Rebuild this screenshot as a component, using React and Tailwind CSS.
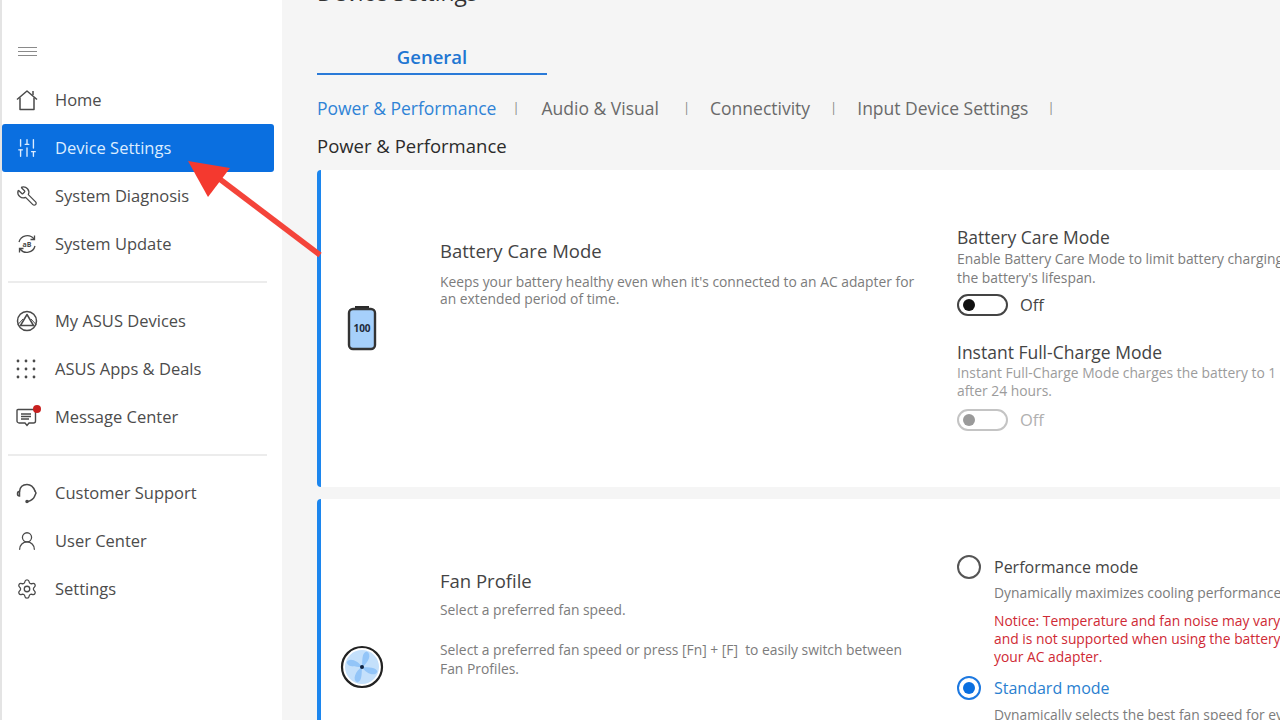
import React from "react";
import { Wrench, UserRound, Settings, SlidersVertical } from "lucide-react";

const font = { fontFamily: '"Open Sans", "Noto Sans", sans-serif' };

// small custom icons, the ASUS ones aren't in lucide
const MenuIcon = () => (
  <svg width="20" height="12" viewBox="0 0 20 12" fill="none" stroke="#8a8a8a" strokeWidth="1.2">
    <path d="M0 1.5H19M0 5.5H19M0 9.5H19" />
  </svg>
);

const HomeIcon = () => (
  <svg width="22" height="22" viewBox="0 0 22 22" fill="none" stroke="#4a4a4a" strokeWidth="1.5" strokeLinejoin="round">
    <path d="M1 10.5L11 2L21 10.5" />
    <path d="M4 8.5V20.5H18V8.5" />
    <path d="M17 2V6" />
  </svg>
);

const UpdateIcon = () => (
  <svg width="22" height="22" viewBox="0 0 22 22" fill="none" stroke="#4a4a4a" strokeWidth="1.3">
    <path d="M3 9a8.5 8.5 0 0 1 15-3" />
    <path d="M19 13a8.5 8.5 0 0 1-15 3" />
    <path d="M18.5 2.5V6.5H14.5" />
    <path d="M3.5 19.5V15.5H7.5" />
    <text x="11" y="13.5" textAnchor="middle" fontSize="7" fontWeight="700" fill="#4a4a4a" stroke="none">aB</text>
  </svg>
);

const DevicesIcon = () => (
  <svg width="22" height="22" viewBox="0 0 22 22" fill="none" stroke="#4a4a4a" strokeWidth="1.5">
    <circle cx="11" cy="11" r="9.5" />
    <path d="M11 4.5L17.5 15.5H4.5Z" strokeLinejoin="round" />
    <path d="M2 14.5L7 9M20 14.5L15 9" strokeWidth="1" />
  </svg>
);

const AppsIcon = () => (
  <svg width="20" height="20" viewBox="0 0 20 20" fill="#4a4a4a">
    {[2, 10, 18].map((y) =>
      [2, 10, 18].map((x) => <circle key={`${x}-${y}`} cx={x} cy={y} r="1.4" />)
    )}
  </svg>
);

const MessageIcon = () => (
  <div className="relative w-[22px] h-[22px]">
    <svg width="22" height="22" viewBox="0 0 22 22" fill="none" stroke="#4a4a4a" strokeWidth="1.4">
      <path d="M2 3.5H17.5C18.5 3.5 19.5 4.5 19.5 5.5V15C19.5 16 18.5 17 17.5 17H13L11 19.5L9 17H3C2 17 1 16 1 15V4.5C1 4 1.5 3.5 2 3.5Z" />
      <path d="M5 8H15M5 10.5H15M5 13H13" />
    </svg>
    <span className="absolute -top-[1px] right-[-3px] w-2 h-2 rounded-full bg-[#c8201f]" />
  </div>
);

const SupportIcon = () => (
  <svg width="22" height="22" viewBox="0 0 22 22" fill="none" stroke="#4a4a4a" strokeWidth="1.5" strokeLinecap="round">
    <path d="M3.5 9.5C4 5 7 2.5 11 2.5C14.5 2.5 17.5 5 19 9" />
    <path d="M19 9L20 11L18.5 14.5C17.5 17 15 18.5 12 19.5" />
    <path d="M3 9.5C2 9.5 1.5 10.5 1.5 12C1.5 13.5 2 14 3.5 14V9.5Z" />
    <circle cx="11" cy="19.5" r="1" fill="#4a4a4a" />
  </svg>
);

const BatteryIcon = () => (
  <svg width="30" height="46" viewBox="0 0 30 46">
    <path d="M8 2.5H22" stroke="#2b2b2b" strokeWidth="3" />
    <rect x="2" y="4" width="26" height="40" rx="4" fill="#a6d0fb" stroke="#333" strokeWidth="2.4" />
    <text x="15" y="27" textAnchor="middle" fontSize="10" fontWeight="700" fill="#1d2a3a" style={font}>100</text>
  </svg>
);

const FanIcon = () => (
  <svg width="44" height="44" viewBox="0 0 44 44">
    <circle cx="22" cy="22" r="20" fill="#fff" stroke="#222" strokeWidth="2.2" />
    <circle cx="22" cy="22" r="17" fill="#c4e0fb" />
    <g transform="rotate(20 22 22)">
      <path d="M22 22C20 15 17 9 21 6C27 6 27 16 22 22Z" fill="#93c5f8" />
      <path d="M22 22C29 20 35 17 38 21C38 27 28 27 22 22Z" fill="#93c5f8" />
      <path d="M22 22C24 29 27 35 23 38C17 38 17 28 22 22Z" fill="#93c5f8" />
      <path d="M22 22C15 24 9 27 6 23C6 17 16 17 22 22Z" fill="#93c5f8" />
    </g>
    <circle cx="22" cy="22" r="2" fill="#10233f" />
  </svg>
);

const NavItem = ({ icon, label, active }) => (
  <div
    className={`flex items-center h-12 w-[272px] rounded-[3px] text-[16.5px] ${
      active ? "bg-[#0a6fe0] text-[#dcecff]" : "text-[#4c4c4c]"
    }`}
  >
    <div className="w-[53px] pl-[14px] flex items-center">{icon}</div>
    <span>{label}</span>
  </div>
);

const Toggle = ({ disabled }) => (
  <div className="flex items-center gap-3">
    <div
      className={`w-[51px] h-[22px] rounded-full border-2 flex items-center pl-1 ${
        disabled ? "border-[#c4c4c4]" : "border-[#444]"
      }`}
    >
      <span className={`w-3 h-3 rounded-full ${disabled ? "bg-[#9a9a9a]" : "bg-[#111]"}`} />
    </div>
    <span className={`text-[16.5px] ${disabled ? "text-[#b0b0b0]" : "text-[#444]"}`}>Off</span>
  </div>
);

export default function App() {
  return (
    <div className="relative w-[1280px] h-[720px] overflow-hidden flex bg-[#f5f5f5]" style={font}>
      <aside className="w-[282px] shrink-0 bg-white border-l-2 border-[#e4e4e4]">
        <div className="pl-[16px] pt-[46px] h-[76px]">
          <MenuIcon />
        </div>
        <NavItem icon={<HomeIcon />} label="Home" />
        <NavItem icon={<SlidersVertical size={22} strokeWidth={1.5} color="#dcecff" />} label="Device Settings" active />
        <NavItem icon={<Wrench size={22} strokeWidth={1.4} color="#4a4a4a" className="-scale-x-100" />} label="System Diagnosis" />
        <NavItem icon={<UpdateIcon />} label="System Update" />
        <div className="h-[2px] bg-[#ececec] ml-[6px] w-[259px] mt-[13px] mb-[14px]" />
        <NavItem icon={<DevicesIcon />} label="My ASUS Devices" />
        <NavItem icon={<AppsIcon />} label="ASUS Apps & Deals" />
        <NavItem icon={<MessageIcon />} label="Message Center" />
        <div className="h-[2px] bg-[#ececec] ml-[6px] w-[259px] mt-[13px] mb-[13px]" />
        <NavItem icon={<SupportIcon />} label="Customer Support" />
        <NavItem icon={<UserRound size={22} strokeWidth={1.4} color="#4a4a4a" />} label="User Center" />
        <NavItem icon={<Settings size={22} strokeWidth={1.4} color="#4a4a4a" />} label="Settings" />
      </aside>

      <main className="flex-1 min-w-0 pl-[35px] -mt-[20px]">
        <div className="text-[22.8px] leading-[26px] text-[#333] whitespace-nowrap">Device Settings</div>

        <div className="w-[230px] mt-[28px] border-b-2 border-[#2a7ad8] text-center text-[18.5px] leading-[34px] h-[41px] pt-[6px] text-[#2176d2] font-semibold">
          General
        </div>

        <div className="flex items-center mt-[20px] h-[26px] text-[17.5px] whitespace-nowrap text-[#6a6a6a]">
          <span className="text-[#2f83d6]">Power &amp; Performance</span>
          <span className="ml-[16px] mr-[22px] text-[13px] text-[#888]">|</span>
          <span>Audio &amp; Visual</span>
          <span className="ml-[24px] mr-[20px] text-[13px] text-[#888]">|</span>
          <span>Connectivity</span>
          <span className="ml-[20px] mr-[20px] text-[13px] text-[#888]">|</span>
          <span>Input Device Settings</span>
          <span className="ml-[19px] text-[13px] text-[#888]">|</span>
        </div>

        <div className="mt-[12px] h-[26px] text-[18.5px] leading-[26px] text-[#2b2b2b]">Power &amp; Performance</div>

        <section className="mt-[11px] h-[317px] bg-white border-l-4 border-[#1c86ee] rounded-l-[4px] flex whitespace-nowrap">
          <div className="w-[119px] shrink-0 pl-[26px] pt-[135px]">
            <BatteryIcon />
          </div>
          <div className="w-[517px] shrink-0 pt-[68px]">
            <div className="text-[18.5px] leading-[26px] text-[#444]">Battery Care Mode</div>
            <div className="mt-[9px] text-[13.85px] leading-[17px] text-[#7c7c7c]">
              Keeps your battery healthy even when it's connected to an AC adapter for
              <br />
              an extended period of time.
            </div>
          </div>
          <div className="pt-[55px]">
            <div className="text-[17.5px] leading-[24px] text-[#444]">Battery Care Mode</div>
            <div className="text-[13.85px] leading-[19px] text-[#7c7c7c]">
              Enable Battery Care Mode to limit battery charging
              <br />
              the battery's lifespan.
            </div>
            <div className="mt-[6px]"><Toggle /></div>
            <div className="mt-[22px] text-[17.5px] leading-[24px] text-[#444]">Instant Full-Charge Mode</div>
            <div className="text-[13.85px] leading-[18.5px] text-[#9c9c9c]">
              Instant Full-Charge Mode charges the battery to 1
              <br />
              after 24 hours.
            </div>
            <div className="mt-[7px]"><Toggle disabled /></div>
          </div>
        </section>

        <section className="mt-[12px] h-[300px] bg-white border-l-4 border-[#1c86ee] rounded-l-[4px] flex whitespace-nowrap">
          <div className="w-[119px] shrink-0 pl-[19px] pt-[146px]">
            <FanIcon />
          </div>
          <div className="w-[517px] shrink-0 pt-[69px]">
            <div className="text-[18.5px] leading-[26px] text-[#444]">Fan Profile</div>
            <div className="mt-[7px] text-[13.85px] leading-[17px] text-[#7c7c7c]">Select a preferred fan speed.</div>
            <div className="mt-[22px] text-[13.85px] leading-[19px] text-[#7c7c7c]">
              Select a preferred fan speed or press [Fn] + [F]&nbsp; to easily switch between
              <br />
              Fan Profiles.
            </div>
          </div>
          <div className="pt-[56px]">
            <div className="flex items-center gap-[13px] h-[24px]">
              <span className="w-6 h-6 rounded-full border-2 border-[#555]" />
              <span className="text-[16px] text-[#444]">Performance mode</span>
            </div>
            <div className="ml-[37px]">
              <div className="mt-[5px] text-[13.85px] leading-[17px] text-[#7c7c7c]">Dynamically maximizes cooling performance</div>
              <div className="mt-[11px] text-[13.85px] leading-[18px] text-[#cf2a35]">
                Notice: Temperature and fan noise may vary
                <br />
                and is not supported when using the battery
                <br />
                your AC adapter.
              </div>
            </div>
            <div className="flex items-center gap-[13px] h-[24px] mt-[10px]">
              <span className="w-6 h-6 rounded-full border-2 border-[#1c78e0] flex items-center justify-center">
                <span className="w-3 h-3 rounded-full bg-[#0a6fe0]" />
              </span>
              <span className="text-[16px] text-[#2a7fd0]">Standard mode</span>
            </div>
            <div className="ml-[37px] mt-[6px] text-[13.85px] leading-[17px] text-[#7c7c7c]">
              Dynamically selects the best fan speed for ev
            </div>
          </div>
        </section>
      </main>

      {/* annotation arrow */}
      <svg className="absolute left-0 top-0 pointer-events-none" width="1280" height="720">
        <path d="M320 255L217 177" stroke="#f4443a" strokeWidth="5.5" fill="none" />
        <path d="M188 161L230 168L208 197Z" fill="#f4392f" />
      </svg>
    </div>
  );
}
